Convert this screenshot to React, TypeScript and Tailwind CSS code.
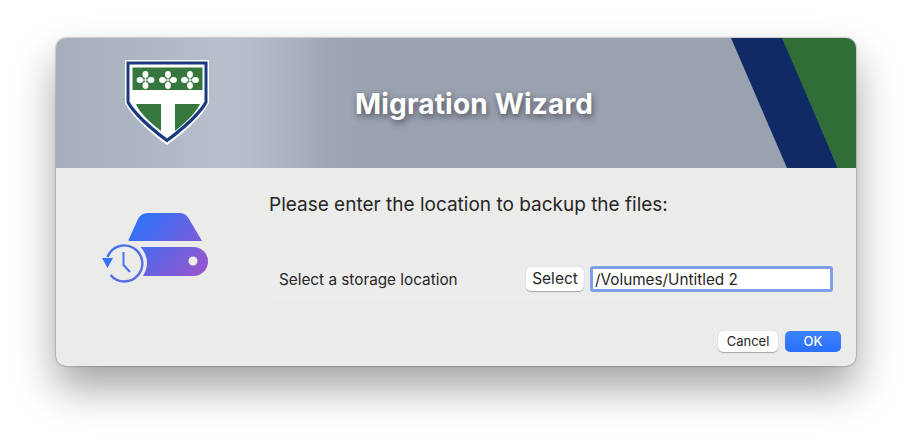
import React from "react";

const Shield = () => (
  <svg width="84" height="85" viewBox="0 0 84 85">
    <path d="M0 0H84V43C78 55 60 72 42 85C24 72 6 55 0 43Z" fill="#ffffff" />
    <path d="M1.5 1.5H82.5V42.5C77 54 59 70 42 82.5C25 70 7 54 1.5 42.5Z" fill="#1a3a80" />
    <path d="M4.5 4.5H79.5V41.5C74 52 57 67 42 78.5C27 67 10 52 4.5 41.5Z" fill="#ffffff" />
    <rect x="7.5" y="7.5" width="70" height="22.5" fill="#35773d" />
    <path d="M11 44H36V71C26 63 15 54 11 44Z" fill="#35773d" />
    <path d="M50 44H75C70 54 60 63 50 71Z" fill="#35773d" />
    {[20.5, 43, 65].map((x) => (
      <g key={x} fill="#ffffff">
        <ellipse cx={x - 5.5} cy={20} rx="3.4" ry="2.9" />
        <ellipse cx={x + 5.5} cy={20} rx="3.4" ry="2.9" />
        <ellipse cx={x} cy={14.5} rx="2.9" ry="3.4" />
        <ellipse cx={x} cy={25.5} rx="2.9" ry="3.4" />
        <rect x={x - 0.5} y={16} width="1" height="8" />
        <rect x={x - 4} y={19.5} width="8" height="1" />
      </g>
    ))}
  </svg>
);

const BackupIcon = () => (
  <svg width="110" height="76" viewBox="0 0 110 76">
    <defs>
      <linearGradient id="disk" gradientUnits="userSpaceOnUse" x1="35" y1="10" x2="100" y2="70">
        <stop offset="0" stopColor="#2f72fb" />
        <stop offset="1" stopColor="#9a55cc" />
      </linearGradient>
      <linearGradient id="clock" gradientUnits="userSpaceOnUse" x1="0" y1="35" x2="45" y2="75">
        <stop offset="0" stopColor="#3573f8" />
        <stop offset="1" stopColor="#6a68e0" />
      </linearGradient>
    </defs>
    <path d="M28 31L38 9Q41 3 48 3H80Q86 3 89 9L102 31Z" fill="url(#disk)" />
    <path d="M35 37H93.5A14.5 14.5 0 0 1 93.5 66H35Z" fill="url(#disk)" />
    <circle cx="93" cy="51" r="4.5" fill="#ebebea" />
    <circle cx="24" cy="53" r="23" fill="#ebebea" />
    <path d="M7.5 47A18 18 0 1 1 10.5 65" fill="none" stroke="url(#clock)" strokeWidth="2.4" />
    <path d="M2 48H13L7.5 58Z" fill="#3573f8" />
    <path d="M23.5 42V55L30 62" fill="none" stroke="#4a70ee" strokeWidth="2" />
  </svg>
);

export default function App() {
  return (
    <div className="w-[912px] h-[440px] bg-white pl-[56px] pt-[38px] font-['Inter',sans-serif] overflow-hidden">
      <div className="w-[800px] h-[328px] flex flex-col rounded-[10px] overflow-hidden bg-[#ebebea] shadow-[0_22px_42px_rgba(0,0,0,0.36),0_0_2px_rgba(0,0,0,0.55)]">
        <div className="relative h-[130px] shrink-0 flex items-center bg-[linear-gradient(90deg,#a6adbb_0%,#aeb5c2_10%,#b8bfcc_20%,#b6bdca_24%,#a9b0be_30%,#9fa6b4_34%,#9aa1af_40%,#9aa1af_100%)]">
          <div className="ml-[69px] mt-[-1px] flex">
            <Shield />
          </div>
          <h1 className="ml-[146px] mt-[2px] text-[28px] font-bold text-white tracking-[0.2px] [text-shadow:1px_3px_6px_rgba(0,0,0,0.5)]">
            Migration Wizard
          </h1>
          {/* corner stripes */}
          <svg className="absolute right-0 top-0" width="125" height="130" viewBox="0 0 125 130">
            <path d="M0 0H52L107 130H56Z" fill="#102a66" />
            <path d="M51 0H125V130H107Z" fill="#316d36" />
          </svg>
        </div>
        <div className="flex flex-1">
          <div className="w-[213px] shrink-0 pl-[44px] pt-[42px]">
            <BackupIcon />
          </div>
          <div className="flex-1 flex flex-col">
            <p className="mt-[26px] text-[19px] leading-[22px] text-[#262626]">
              Please enter the location to backup the files:
            </p>
            <div className="mt-[42px] mr-[20px] h-[42px] flex items-center bg-[#ececec] rounded-[3px]">
              <span className="ml-[10px] w-[247px] pt-[2px] text-[15.3px] text-[#262626]">Select a storage location</span>
              <button className="w-[58px] h-[24px] bg-white rounded-[5px] text-[15.5px] leading-[20px] text-[#262626] shadow-[0_0.5px_1px_rgba(0,0,0,0.3)]">
                Select
              </button>
              <div className="ml-[6px] w-[243px] h-[26px] flex items-center bg-white border-[3px] border-[#7f9feb] rounded-[3px] pl-[2px] pt-[2px] text-[15.3px] text-[#262626]">
                /Volumes/Untitled 2
              </div>
            </div>
            <div className="mt-[31px] mr-[15px] flex justify-end gap-[7px]">
              <button className="w-[60px] h-[21px] bg-white rounded-[5px] text-[13px] leading-[21px] text-[#262626] shadow-[0_0.5px_1px_rgba(0,0,0,0.3)]">
                Cancel
              </button>
              <button className="w-[56px] h-[21px] bg-[linear-gradient(180deg,#3d83fb,#2a6ffa)] rounded-[5px] text-[13px] leading-[21px] font-medium text-white">
                OK
              </button>
            </div>
          </div>
        </div>
      </div>
    </div>
  );
}
